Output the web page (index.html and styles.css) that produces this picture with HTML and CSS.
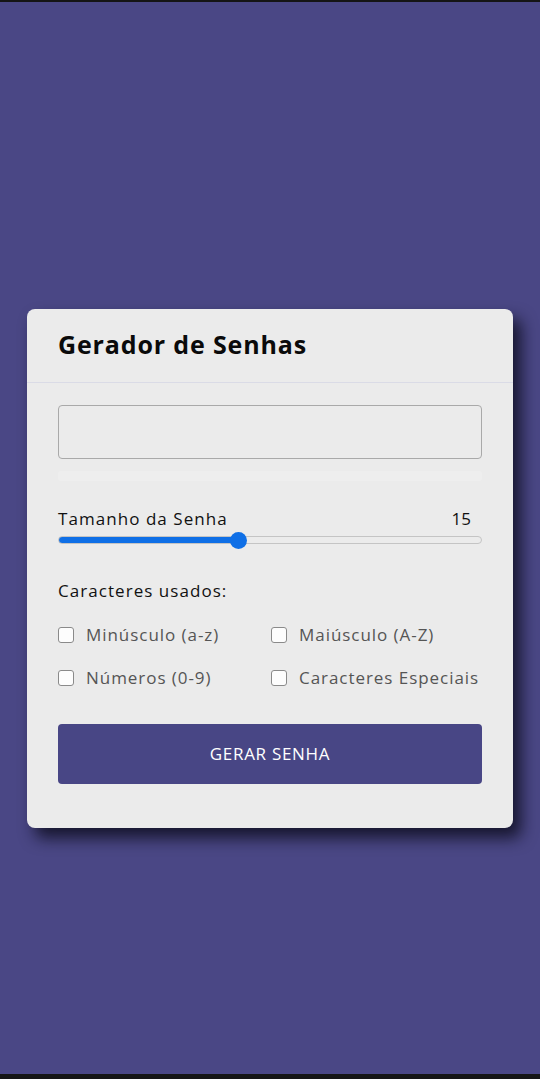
FILE: index.html
```html
<!DOCTYPE html>
<html lang="pt-BR">
<head>
<meta charset="utf-8">
<title>Gerador de Senhas</title>
<link rel="stylesheet" href="styles.css">
</head>
<body>
<div class="screen">
  <div class="card">
    <div class="card-header">
      <h1 class="title">Gerador de Senhas</h1>
    </div>
    <div class="card-body">
      <input class="password" type="text" readonly>
      <div class="strength"></div>
      <div class="length-row">
        <span class="label">Tamanho da Senha</span>
        <span class="value">15</span>
      </div>
      <input class="range" type="range" min="4" max="30" value="15" style="--fill: 42.7%">
      <p class="label chars-title">Caracteres usados:</p>
      <div class="options">
        <label class="option"><input type="checkbox"><span>Minúsculo (a-z)</span></label>
        <label class="option"><input type="checkbox"><span>Maiúsculo (A-Z)</span></label>
        <label class="option"><input type="checkbox"><span>Números (0-9)</span></label>
        <label class="option"><input type="checkbox"><span>Caracteres Especiais</span></label>
      </div>
      <button class="generate" type="button">GERAR SENHA</button>
    </div>
  </div>
</div>
</body>
</html>
```

FILE: styles.css
```css
* { box-sizing: border-box; }
html, body { margin: 0; padding: 0; }
body {
  background: #151515;
  font-family: "Open Sans", "Lato", sans-serif;
}
.screen {
  margin-top: 2px;
  height: 1072px;
  background: #4a4785;
  display: flex;
  flex-direction: column;
  align-items: center;
  padding-top: 307px;
}
.card {
  width: 486px;
  background: #ebebeb;
  border-radius: 8px;
  box-shadow: 8px 10px 16px rgba(10, 10, 25, 0.8);
}
.card-header {
  height: 74px;
  border-bottom: 1px solid #dadbe6;
  padding: 19px 31px 0;
}
.title {
  margin: 0;
  font-family: "Open Sans", sans-serif;
  font-weight: 700;
  font-size: 25px;
  line-height: 32px;
  color: #0a0a0a;
  letter-spacing: 0.85px;
}
.card-body {
  padding: 22px 31px 44px;
}
.password {
  display: block;
  width: 100%;
  height: 54px;
  border: 1px solid #a9a9a9;
  border-radius: 4px;
  background: #ebebeb;
  outline: none;
}
.strength {
  height: 10px;
  margin-top: 12px;
  background: #eeeeee;
  border-radius: 3px;
}
.length-row {
  display: flex;
  justify-content: space-between;
  margin-top: 27px;
  padding-right: 11px;
}
.label {
  font-size: 17px;
  line-height: 22px;
  color: #111;
  letter-spacing: 1.05px;
}
.value {
  font-size: 17px;
  line-height: 22px;
  color: #111;
}
.range {
  -webkit-appearance: none;
  appearance: none;
  display: block;
  width: 100%;
  height: 16px;
  margin: 2px 0 0;
  background: transparent;
}
.range::-webkit-slider-runnable-track {
  height: 8px;
  border-radius: 4px;
  border: 1px solid #c4c4c4;
  background: linear-gradient(to right, #0f6fe6 0, #0f6fe6 var(--fill), #ebebeb var(--fill));
}
.range::-webkit-slider-thumb {
  -webkit-appearance: none;
  width: 17px;
  height: 17px;
  border-radius: 50%;
  background: #0f6fe6;
  margin-top: -5.5px;
  border: none;
}
.chars-title {
  margin: 32px 0 0;
}
.options {
  display: grid;
  grid-template-columns: 213px 1fr;
  row-gap: 21px;
  margin-top: 22px;
}
.option {
  display: flex;
  align-items: center;
  gap: 12px;
  font-size: 17px;
  line-height: 22px;
  color: #555;
  letter-spacing: 0.95px;
}
.option input {
  -webkit-appearance: none;
  appearance: none;
  margin: 0;
  width: 16px;
  height: 16px;
  border: 1px solid #8a8a8a;
  border-radius: 3px;
  background: #fdfdfd;
}
.generate {
  display: block;
  width: 100%;
  height: 60px;
  margin-top: 35px;
  border: none;
  border-radius: 4px;
  background: #484685;
  color: #fff;
  font-family: "Open Sans", sans-serif;
  font-size: 17px;
  letter-spacing: 0.7px;
  padding-bottom: 3px;
}
```
